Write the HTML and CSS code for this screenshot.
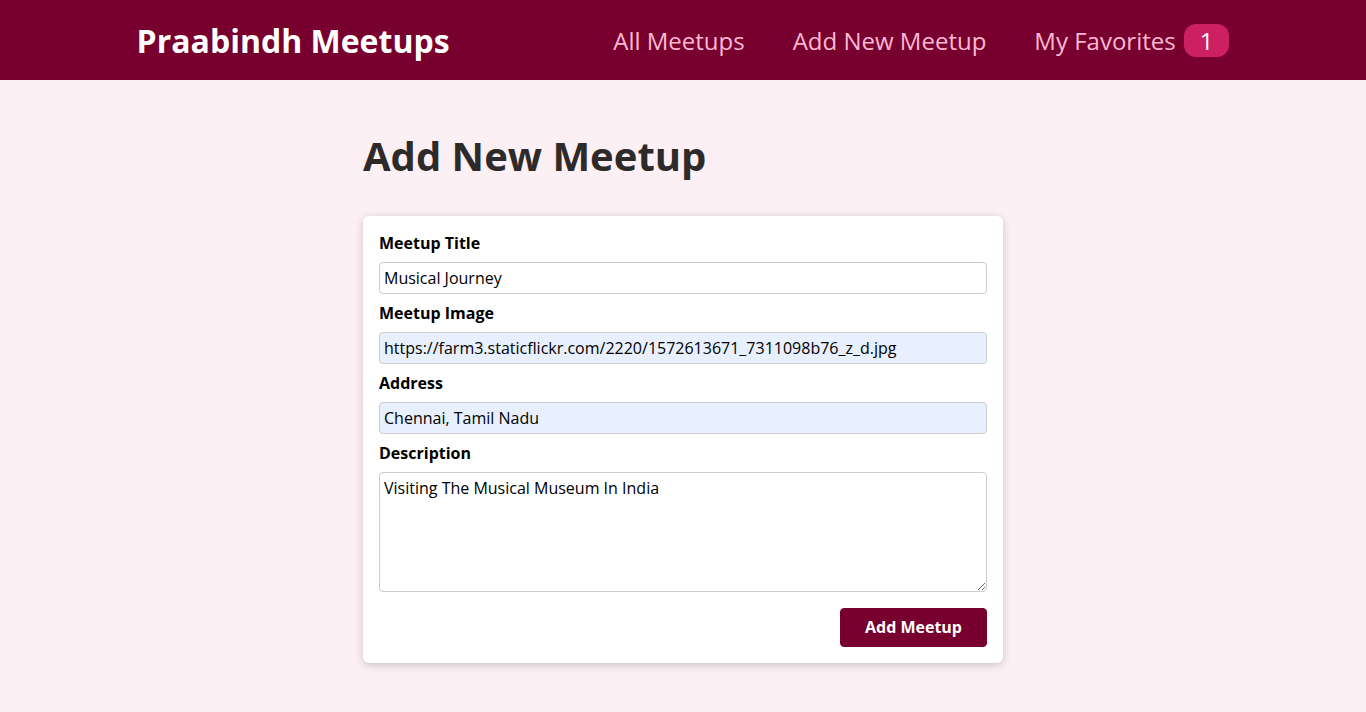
FILE: index.html
```html
<!DOCTYPE html>
<html lang="en">
<head>
<meta charset="utf-8">
<title>Praabindh Meetups</title>
<link rel="stylesheet" href="styles.css">
</head>
<body>
<header class="header">
  <div class="logo">Praabindh Meetups</div>
  <nav>
    <ul class="nav-list">
      <li><a href="#">All Meetups</a></li>
      <li><a href="#">Add New Meetup</a></li>
      <li><a href="#">My Favorites<span class="badge">1</span></a></li>
    </ul>
  </nav>
</header>
<main class="main">
  <section>
    <h1 class="title">Add New Meetup</h1>
    <div class="card">
      <form class="form">
        <div class="control">
          <label for="title">Meetup Title</label>
          <input type="text" id="title" value="Musical Journey">
        </div>
        <div class="control">
          <label for="image">Meetup Image</label>
          <input type="url" id="image" class="autofill" value="https://farm3.staticflickr.com/2220/1572613671_7311098b76_z_d.jpg">
        </div>
        <div class="control">
          <label for="address">Address</label>
          <input type="text" id="address" class="autofill" value="Chennai, Tamil Nadu">
        </div>
        <div class="control">
          <label for="description">Description</label>
          <textarea id="description" rows="5">Visiting The Musical Museum In India</textarea>
        </div>
        <div class="actions">
          <button type="button">Add Meetup</button>
        </div>
      </form>
    </div>
  </section>
</main>
</body>
</html>
```
FILE: styles.css
```css
* {
  box-sizing: border-box;
}

html {
  font-family: "Open Sans", sans-serif;
}

body {
  margin: 0;
  background-color: #fcf0f5;
}

.header {
  width: 100%;
  height: 5rem;
  display: flex;
  align-items: center;
  justify-content: space-between;
  background-color: #77002e;
  padding: 0 10%;
}

.logo {
  font-size: 2rem;
  color: white;
  font-weight: bold;
}

.nav-list {
  list-style: none;
  margin: 0;
  padding: 0;
  display: flex;
  align-items: baseline;
}

.nav-list li {
  margin-left: 3rem;
}

.nav-list a {
  text-decoration: none;
  font-size: 1.5rem;
  color: #fcb8d2;
}

.badge {
  background-color: #cc2062;
  color: white;
  border-radius: 12px;
  padding: 0 1rem;
  margin-left: 0.5rem;
}

.main {
  margin: 3rem auto;
  width: 90%;
  max-width: 40rem;
}

.title {
  font-size: 2.5rem;
  color: #2e2a2a;
  margin: 0 0 33px;
}

.card {
  background-color: white;
  border-radius: 6px;
  box-shadow: 0 2px 8px rgba(0, 0, 0, 0.2);
}

.form {
  padding: 1rem;
}

.control {
  margin-bottom: 0.5rem;
}

.control label {
  display: block;
  font-weight: bold;
  margin-bottom: 0.5rem;
}

.control input,
.control textarea {
  display: block;
  font: inherit;
  color: #000;
  padding: 0.25rem;
  border-radius: 4px;
  border: 1px solid #ccc;
  width: 100%;
  background-color: white;
}

.control .autofill {
  background-color: #e8f0fe;
}

.actions {
  margin-top: 1rem;
  text-align: right;
}

.actions button {
  font: inherit;
  line-height: 21px;
  cursor: pointer;
  background-color: #77002e;
  color: white;
  padding: 0.5rem 1.5rem;
  border: 1px solid #77002e;
  border-radius: 4px;
  font-weight: bold;
}
```
